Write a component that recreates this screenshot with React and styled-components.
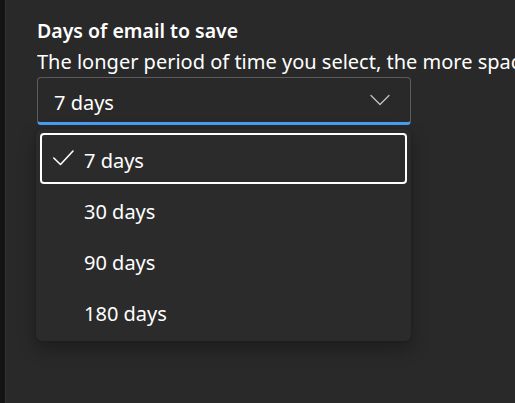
import React from "react";
import styled, { createGlobalStyle } from "styled-components";

const Global = createGlobalStyle`
  html, body { margin: 0; padding: 0; background: #292929; }
  body { font-family: "Noto Sans", "Open Sans", sans-serif; color: #ffffff; }
`;

const Page = styled.div`
  display: flex;
  width: 515px;
  height: 403px;
  overflow: hidden;
  background: #292929;
`;

const Rail = styled.div`
  width: 5px;
  flex: none;
  background: #141414;
  border-right: 1px solid #333333;
`;

const Content = styled.div`
  flex: 1;
  min-width: 0;
  padding: 19px 0 0 31px;
  white-space: nowrap;
  overflow: hidden;
`;

const Title = styled.div`
  font-size: 19.5px;
  font-weight: 600;
  line-height: 24px;
  color: #ffffff;
`;

const Description = styled.div`
  font-size: 20px;
  line-height: 28px;
  margin-top: 5px;
  color: #ffffff;
  overflow: hidden;
`;

const Select = styled.div`
  box-sizing: border-box;
  margin-top: 1px;
  width: 374px;
  height: 48px;
  border: 1px solid #5c5c5c;
  border-bottom: 3px solid #479ef5;
  border-radius: 4px;
  display: flex;
  align-items: center;
  justify-content: space-between;
  padding: 5px 20px 0 16px;
  font-size: 20px;
  background: #292929;
`;

const Menu = styled.div`
  box-sizing: border-box;
  margin-top: 4px;
  margin-left: -1px;
  width: 375px;
  padding: 4px;
  background: #2b2b2b;
  border-radius: 6px;
  box-shadow: 0 8px 18px rgba(0, 0, 0, 0.3), 0 0 2px rgba(0, 0, 0, 0.25);
`;

const Item = styled.div`
  box-sizing: border-box;
  height: 51px;
  display: flex;
  align-items: center;
  padding: 4px 0 0 11px;
  font-size: 20px;
  border-radius: 4px;
  border: 2px solid ${(p) => (p.$focused ? "#ffffff" : "transparent")};
`;

const CheckSlot = styled.span`
  width: 31px;
  flex: none;
  display: flex;
  align-items: center;
`;

const Chevron = () => (
  <svg width="20" height="20" viewBox="0 0 20 20" fill="none">
    <path d="M1 2.5 L10 11.5 L19 2.5" stroke="#c4c4c4" strokeWidth="1.3" strokeLinecap="round" strokeLinejoin="round" />
  </svg>
);

const Check = () => (
  <svg width="24" height="24" viewBox="0 0 24 24" fill="none">
    <path d="M0.8 9 L7.5 15.5 L20 2" stroke="#ffffff" strokeWidth="1.6" strokeLinecap="round" strokeLinejoin="round" />
  </svg>
);

const options = ["7 days", "30 days", "90 days", "180 days"];

export default function App() {
  return (
    <>
      <Global />
      <Page>
        <Rail />
        <Content>
          <Title>Days of email to save</Title>
          <Description>The longer period of time you select, the more space</Description>
          <Select>
            <span>7 days</span>
            <Chevron />
          </Select>
          <Menu>
            {options.map((o, i) => (
              <Item key={o} $focused={i === 0}>
                <CheckSlot>{i === 0 && <Check />}</CheckSlot>
                {o}
              </Item>
            ))}
          </Menu>
        </Content>
      </Page>
    </>
  );
}
